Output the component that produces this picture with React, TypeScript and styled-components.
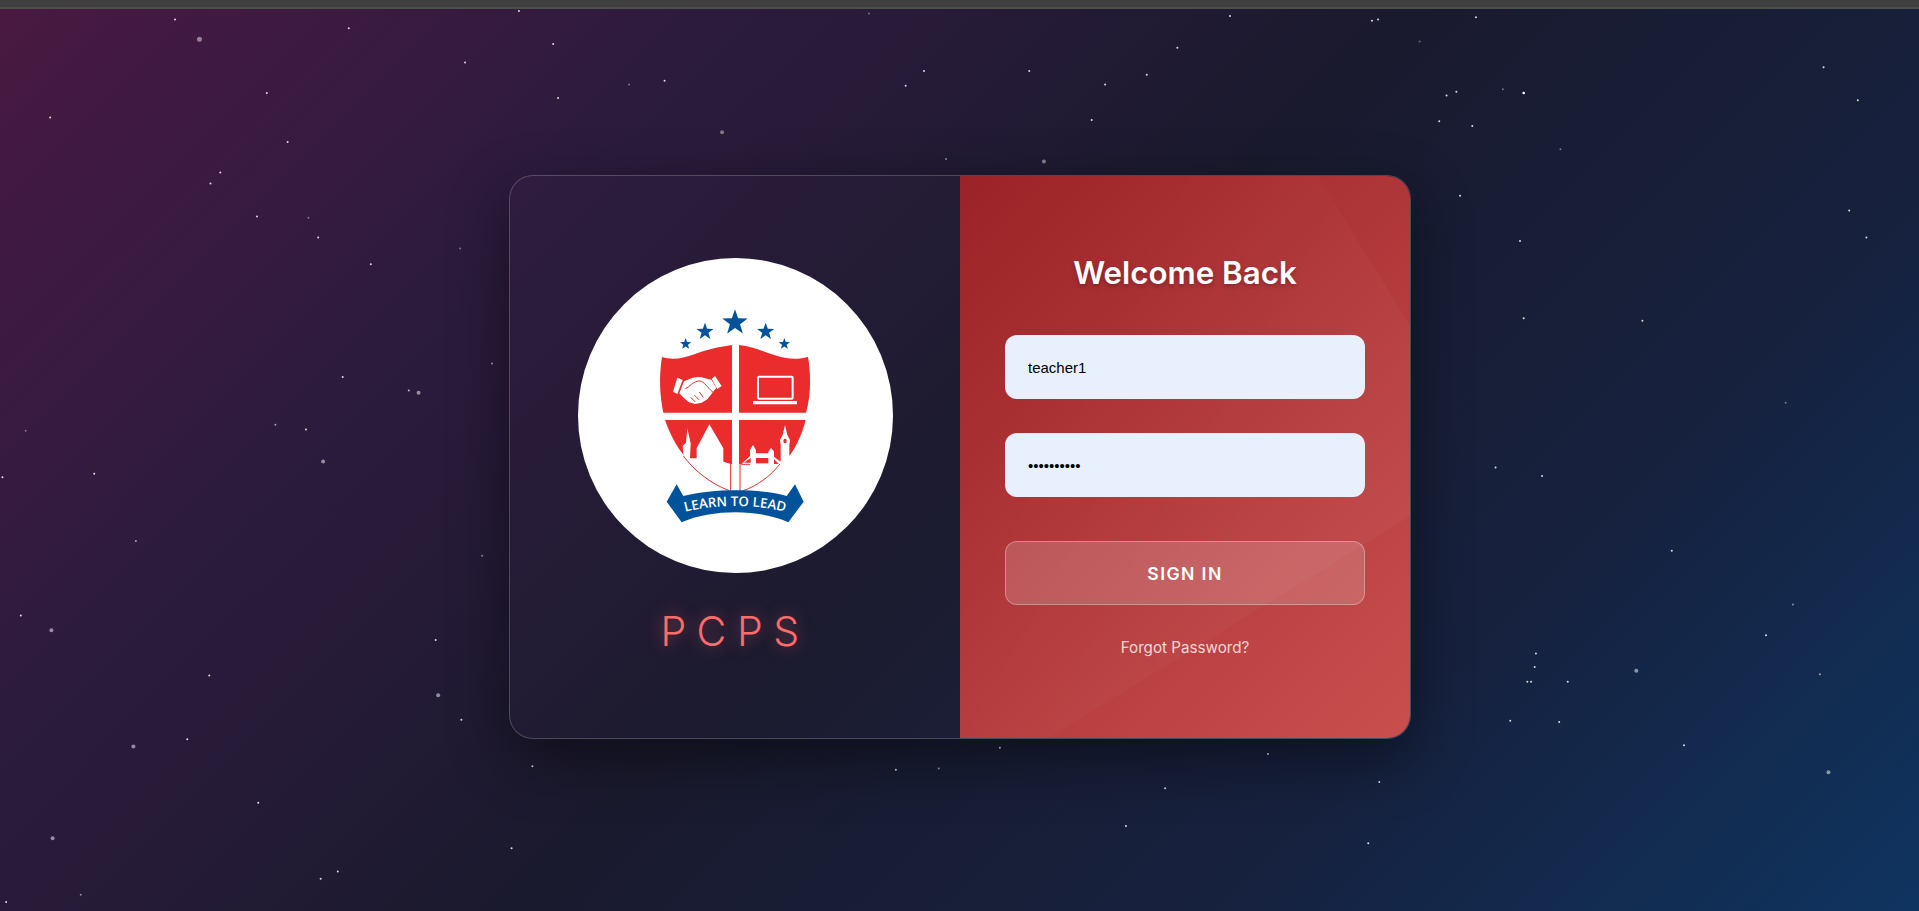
import * as React from "react";
import styled, { createGlobalStyle } from "styled-components";

type Star = [number, number, number?, number?];

const SHRINK = 1919 / 1568;

// positions read off the shrunken reference: x, y, radius, opacity
const STARS: Star[] = [
  [143,16],[163,32,2.5,.45],[285,23],[380,51],[424,9],[452,36],[456,80],[218,76],[41,96],[235,116],[180,141],[172,150],
  [210,177],[252,178,1,.4],[260,194],[303,216],[376,203,1,.4],[514,69,1,.4],[543,66],[590,108,2,.4],[710,11,1,.4],[740,70],
  [755,58],[841,58],[903,69],[892,98],[937,61],[962,39],[1005,13],[1121,17],[1126,16],[1160,34,1,.35],[1206,14],
  [1182,78],[1190,75],[1228,73,1,.4],[1245,76,1.3,1],[1176,99],[1203,103],[1275,122,1,.4],[1490,55],[1518,82],
  [773,130,1,.5],[853,132,2,.45],[1193,160],[1242,197],[1342,262],[1511,172],[1525,194],[1245,260],[1459,329,1,.4],
  [1222,382],[1260,389],[1366,450],[1465,494,1,.5],[1443,519],[1337,548,2,.5],[1255,534],[1251,557],[1248,557],[1254,545],
  [1487,551,1,.6],[1281,557],[1234,589],[1274,590],[1376,609],[1494,631,2,.5],[1127,639],[1036,616],[952,644],[920,675],
  [1118,689],[817,611],[767,628,1,.6],[732,629],[435,626],[418,693],[276,712],[262,718],[211,656],[153,604],[171,552],
  [109,610,2,.5],[42,515,2,.5],[17,503],[356,523],[358,568,2,.5],[377,588],[43,685,2,.5],[66,731,1,.5],[5,737],[2,390],
  [77,387],[264,377,2,.5],[250,351],[225,347,1,.6],[342,321,2,.5],[334,319,1,.7],[280,308],[402,297,1,.6],[21,352,1,.4],
  [111,442,1,.6],[394,454,1,.5],
];

const starPoints = (cx: number, cy: number, r: number) => {
  const pts: string[] = [];
  for (let i = 0; i < 10; i++) {
    const rad = i % 2 === 0 ? r : r * 0.4;
    const a = -Math.PI / 2 + (i * Math.PI) / 5;
    pts.push(`${cx + rad * Math.cos(a)},${cy + rad * Math.sin(a)}`);
  }
  return pts.join(" ");
};

const GlobalStyle = createGlobalStyle`
  html, body {
    margin: 0;
    padding: 0;
    height: 100%;
    overflow: hidden;
    background: #1a1a2e;
    font-family: Inter, "Liberation Sans", sans-serif;
  }
  * { box-sizing: border-box; }
`;

const Page = styled.div`
  position: relative;
  width: 100vw;
  height: 100vh;
  display: flex;
  flex-direction: column;
  background: linear-gradient(135deg, #4a1942 0%, #2d1b3d 25%, #1a1a2e 50%, #16213e 75%, #0f3460 100%);
`;

const BrowserEdge = styled.div`
  height: 9px;
  flex: none;
  background: #3f3f3f;
  border-bottom: 2px solid #4c4f4c;
  position: relative;
  z-index: 2;
`;

const StarField = styled.svg`
  position: absolute;
  inset: 0;
  width: 100%;
  height: 100%;
`;

const Stage = styled.main`
  flex: 1;
  position: relative;
  display: flex;
  align-items: flex-start;
  justify-content: center;
  padding-top: 166px;
`;

const Card = styled.div`
  width: 902px;
  height: 564px;
  margin-left: 1px;
  display: flex;
  border-radius: 24px;
  border: 1px solid rgba(255, 255, 255, 0.2);
  overflow: hidden;
  box-shadow: 0 20px 60px rgba(0, 0, 0, 0.45);
  background: rgba(255, 200, 200, 0.012);
`;

const BrandPanel = styled.section`
  width: 450px;
  display: flex;
  flex-direction: column;
  align-items: center;
  padding-top: 82px;
`;

const LogoDisc = styled.div`
  width: 315px;
  height: 315px;
  border-radius: 50%;
  background: #fff;
`;

const LogoArt = styled.svg`
  display: block;
  width: 315px;
  height: 315px;
`;

const BrandName = styled.h1`
  margin: 33px 0 0;
  font-size: 41px;
  line-height: 50px;
  font-weight: 300;
  letter-spacing: 10.5px;
  color: #ff6b6b;
  text-shadow: 0 0 15px rgba(255, 107, 107, 0.5);
`;

const FormPanel = styled.section`
  position: relative;
  width: 450px;
  padding: 75px 45px 0;
  display: flex;
  flex-direction: column;
  background: linear-gradient(135deg, #9b2226 0%, #c94f4f 100%);

  &::before {
    content: "";
    position: absolute;
    inset: 0;
    clip-path: polygon(0 0, 358px 0, 450px 150px, 450px 340px, 85px 564px, 0 564px);
    background: linear-gradient(120deg, rgba(255, 255, 255, 0) 20%, rgba(255, 255, 255, 0.03) 75%);
  }
`;

const Title = styled.h2`
  position: relative;
  margin: 0 0 40px;
  text-align: center;
  font-size: 31.3px;
  line-height: 44px;
  font-weight: 600;
  color: #fff;
  text-shadow: 0 2px 4px rgba(0, 0, 0, 0.25);
`;

const Field = styled.input`
  position: relative;
  display: block;
  width: 360px;
  height: 64px;
  margin-bottom: 34px;
  padding: 0 23px;
  border: none;
  border-radius: 12px;
  outline: none;
  background: #e8f0fe;
  color: #000;
  font-family: "Liberation Sans", Arial, sans-serif;
  font-size: 15px;
`;

const SignIn = styled.button`
  position: relative;
  height: 64px;
  margin-top: 10px;
  border-radius: 12px;
  border: 1px solid rgba(255, 255, 255, 0.3);
  background: rgba(255, 255, 255, 0.17);
  color: #fff;
  font-family: Inter, sans-serif;
  font-size: 17.6px;
  font-weight: 600;
  letter-spacing: 1.4px;
`;

const Forgot = styled.a`
  position: relative;
  margin-top: 33px;
  text-align: center;
  font-size: 15.2px;
  line-height: 20px;
  color: rgba(255, 255, 255, 0.8);
`;

const SHIELD_RED = "#ea2c2c";
const BLUE = "#00529b";

const Logo = () => (
  <LogoArt viewBox="-66 -66 945 945">
    {[
      [405, 128, 40],
      [315, 155, 27],
      [497, 155, 27],
      [257, 192, 18],
      [553, 192, 18],
    ].map(([x, y, r]) => (
      <polygon key={x} points={starPoints(x, y, r)} fill={BLUE} />
    ))}
    <g fill={SHIELD_RED}>
      <path d="M186 231C215 240 245 237 285 222C325 207 360 200 396 195L396 398L190 398C180 350 176 290 186 231Z" />
      <path d="M417 195C455 200 480 210 520 224C560 238 595 240 624 230C634 290 632 350 618 398L417 398Z" />
      <path d="M195 420L396 420L396 552L392 552L370 545L370 505L328 433L290 505L290 535L270 535L272 490L262 445L258 488L248 497L250 522L255 530C228 498 208 458 195 420Z" />
      <path d="M417 420L617 420C606 462 590 498 568 528L568 495L570 480L562 465L555 435L548 465L540 480L542 495L542 545L522 530L522 515L513 503L505 515L505 520L468 520L468 510L459 495L450 510L450 528L424 553L417 553Z" />
      <rect x="468" y="534" width="37" height="16" />
      <path d="M452 534L452 548L432 548Z" />
      <path d="M522 537L522 552L536 552Z" />
    </g>
    <g fill="none" stroke={SHIELD_RED} strokeWidth="3">
      <path d="M250 528C285 575 335 612 388 632" />
      <path d="M392 552L392 632" />
      <path d="M420 553L420 632" />
      <path d="M430 632C470 618 510 590 540 552" />
      <path d="M424 553L450 553" />
    </g>
    <ellipse cx="555" cy="483" rx="5" ry="7" fill={SHIELD_RED} />
    <g fill="#fff">
      <path d="M232 293L248 300L232 342L219 335Z" />
      <path d="M345 288L365 318L352 327L335 297Z" />
      <path d="M252 304L278 293C292 290 305 291 312 294L334 299L349 323L332 345L322 358L305 368L285 372L265 366L248 350L238 340Z" />
    </g>
    <path
      d="M256 326C268 322 280 302 300 303C312 304 322 322 340 338M272 352L286 366M284 346L298 360M298 336L310 352"
      fill="none"
      stroke={SHIELD_RED}
      strokeWidth="3"
    />
    <rect x="474" y="290" width="104" height="66" rx="3" fill="none" stroke="#fff" strokeWidth="6" />
    <path d="M459 363L591 363L591 373L459 373Z" fill="#fff" />
    <path d="M200 665L230 613L250 648C340 625 480 625 560 648L585 613L611 665L565 727C480 687 335 687 245 727Z" fill={BLUE} />
    <path id="ribbon-curve" d="M255 696C340 672 470 672 556 696" fill="none" />
    <text fill="#fff" fontFamily="'Open Sans', sans-serif" fontWeight="600" fontSize="40">
      <textPath href="#ribbon-curve" startOffset="50%" textAnchor="middle">
        LEARN TO LEAD
      </textPath>
    </text>
  </LogoArt>
);

const App: React.FC = () => (
  <Page>
    <GlobalStyle />
    <StarField viewBox="0 0 1919 911" preserveAspectRatio="none">
      {STARS.map(([x, y, r = 1, o = 0.85], i) => (
        <circle key={i} cx={x * SHRINK} cy={y * SHRINK} r={r} fill="#fff" opacity={o} />
      ))}
    </StarField>
    <BrowserEdge />
    <Stage>
      <Card>
        <BrandPanel>
          <LogoDisc>
            <Logo />
          </LogoDisc>
          <BrandName>PCPS</BrandName>
        </BrandPanel>
        <FormPanel>
          <Title>Welcome Back</Title>
          <Field type="text" defaultValue="teacher1" />
          <Field type="password" defaultValue="••••••••••" />
          <SignIn type="button">SIGN IN</SignIn>
          <Forgot>Forgot Password?</Forgot>
        </FormPanel>
      </Card>
    </Stage>
  </Page>
);

export default App;
